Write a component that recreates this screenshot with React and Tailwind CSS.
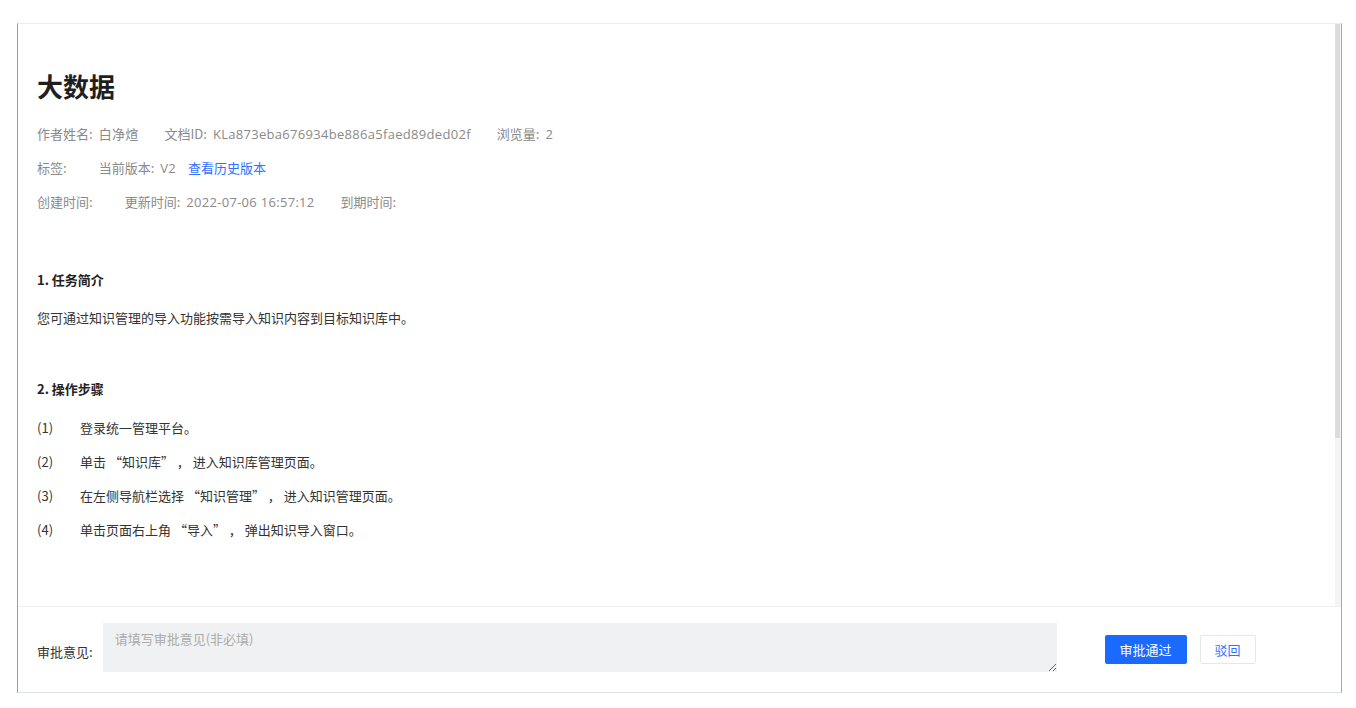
import React from "react";

const font = { fontFamily: '"Noto Sans CJK SC", "Noto Sans", sans-serif' };
const metaFont = { fontFamily: '"Open Sans", "Noto Sans CJK SC", sans-serif' };

function MetaItem({ label, value, children }) {
  return (
    <div className="flex items-center">
      <span style={font}>{label}</span>
      <span className="ml-[6px] tracking-[0.3px]" style={metaFont}>{value}</span>
      {children}
    </div>
  );
}

export default function App() {
  const steps = [
    "登录统一管理平台。",
    "单击 “知识库” ， 进入知识库管理页面。",
    "在左侧导航栏选择 “知识管理” ， 进入知识管理页面。",
    "单击页面右上角 “导入” ， 弹出知识导入窗口。",
  ];
  return (
    <div className="w-[1356px] h-[708px] bg-white pt-[23px] pl-[17px]" style={font}>
      <div className="w-[1325px] h-[670px] flex flex-col border-l border-l-[#9c9c9c] border-t border-t-[#eeeeee] border-r border-r-[#a8a8a8] border-b border-b-[#dde3ea] bg-white">
        <div className="flex flex-1 min-h-0">
          <div className="flex-1 pl-[19px] pt-[45px] text-[13px]">
            <h1 className="text-[26px] leading-[36px] font-bold text-[#1f1f1f] -mt-[1px]">大数据</h1>
            <div className="mt-[13px] text-[#8a8a8a] leading-[34px]">
              <div className="flex gap-[26px]">
                <MetaItem label="作者姓名:" value="白净煊" />
                <MetaItem label="文档ID:" value="KLa873eba676934be886a5faed89ded02f" />
                <MetaItem label="浏览量:" value="2" />
              </div>
              <div className="flex gap-[26px]">
                <MetaItem label="标签:" value="" />
                <MetaItem label="当前版本:" value="V2">
                  <span className="ml-3 text-[#3370ff]">查看历史版本</span>
                </MetaItem>
              </div>
              <div className="flex gap-[26px]">
                <MetaItem label="创建时间:" value="" />
                <MetaItem label="更新时间:" value="2022-07-06 16:57:12" />
                <MetaItem label="到期时间:" value="" />
              </div>
            </div>
            <div className="mt-[44px] leading-[34px] text-[#333333]">
              <div className="font-bold text-[#222222] text-[13px]">1. 任务简介</div>
              <p className="mt-[4px]">您可通过知识管理的导入功能按需导入知识内容到目标知识库中。</p>
              <div className="mt-[37px] font-bold text-[#222222] text-[13px]">2. 操作步骤</div>
              <ul className="mt-[5px]">
                {steps.map((s, i) => (
                  <li key={i} className="flex">
                    <span className="w-[43px]">({i + 1})</span>
                    <span className="whitespace-pre">{s}</span>
                  </li>
                ))}
              </ul>
            </div>
          </div>
          <div className="w-[6px] bg-[#f4f4f4]">
            <div className="h-[414px] w-[5px] bg-[#dcdcdc]" />
          </div>
        </div>
        <div className="h-[86px] border-t border-t-[#f0f0f0] flex items-center pl-[19px] text-[13px]">
          <span className="text-[#333333] mt-[4px]">审批意见:</span>
          <textarea
            className="ml-[10px] w-[954px] h-[49px] bg-[#f0f1f3] px-[12px] py-[6px] text-[13px] text-[#333] placeholder:text-[#ababab] outline-none -mt-[5px]"
            placeholder="请填写审批意见(非必填)"
            style={font}
          />
          <button className="ml-[48px] w-[82px] h-[29px] bg-[#1a6aff] text-white rounded-[2px] text-[13px]">审批通过</button>
          <button className="ml-[13px] w-[56px] h-[29px] bg-white border border-[#e5e7eb] text-[#3370ff] rounded-[2px] text-[13px]">驳回</button>
        </div>
      </div>
    </div>
  );
}
